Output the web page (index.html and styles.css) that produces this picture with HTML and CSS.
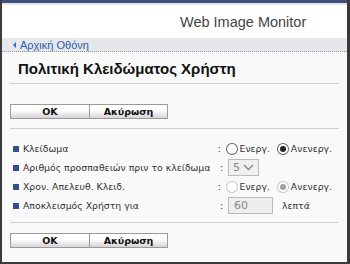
FILE: index.html
```html
<!DOCTYPE html>
<html lang="el">
<head>
<meta charset="utf-8">
<title>Πολιτική Κλειδώματος Χρήστη</title>
<link rel="stylesheet" href="styles.css">
</head>
<body>
<div class="window">
  <div class="topline"></div>
  <header class="header"><span class="brand">Web Image Monitor</span></header>
  <nav class="nav"><span class="arrow"></span><a class="navlink" href="#">Αρχική Οθόνη</a></nav>
  <main class="content">
    <h1 class="title">Πολιτική Κλειδώματος Χρήστη</h1>
    <div class="buttons"><button class="btn">OK</button><button class="btn">Ακύρωση</button></div>
    <ul class="rows">
      <li class="row"><span class="label">Κλείδωμα</span><span class="colon">:</span>
        <span class="radio"></span><span class="rtext">Ενεργ.</span>
        <span class="radio on"></span><span class="rtext">Ανενεργ.</span></li>
      <li class="row"><span class="label">Αριθμός προσπαθειών πριν το κλείδωμα</span><span class="colon">:</span>
        <span class="select">5<svg class="chev" width="11" height="7" viewBox="0 0 11 7"><path d="M1 1 L5.5 5.5 L10 1" fill="none" stroke="#8a8a8a" stroke-width="1.4"/></svg></span></li>
      <li class="row"><span class="label">Χρον. Απελευθ. Κλειδ.</span><span class="colon">:</span>
        <span class="radio dis"></span><span class="rtext dim">Ενεργ.</span>
        <span class="radio on dis"></span><span class="rtext dim">Ανενεργ.</span></li>
      <li class="row"><span class="label">Αποκλεισμός Χρήστη για</span><span class="colon">:</span>
        <span class="input">60</span><span class="unit">λεπτά</span></li>
    </ul>
    <div class="buttons"><button class="btn">OK</button><button class="btn">Ακύρωση</button></div>
  </main>
</div>
</body>
</html>
```
FILE: styles.css
```css
html, body { margin: 0; padding: 0; }
body { width: 350px; height: 264px; overflow: hidden; font-family: "DejaVu Sans", sans-serif; }
.window {
  box-sizing: border-box; width: 350px; height: 264px;
  border-left: 2px solid #3a3a3a; border-right: 3px solid #3a3a3a; border-bottom: 2px solid #3a3a3a;
  background: #f9f9f9; display: flex; flex-direction: column;
}
.topline { height: 3px; background: #3f4f80; border-bottom: 2px solid #e4e4e4; }
.header { height: 33px; background: #fff; display: flex; align-items: center; padding-left: 178px; }
.brand { font-family: "Liberation Sans", Arial, sans-serif; font-size: 14.5px; color: #444; }
.nav { height: 13px; background: #e6e7eb; border-bottom: 1px dotted #999; display: flex; align-items: center; padding-left: 11px; }
.arrow { width: 0; height: 0; border-top: 3px solid transparent; border-bottom: 3px solid transparent; border-right: 3px solid #3366cc; margin-right: 4px; }
.navlink { font-family: "Liberation Sans", Arial, sans-serif; font-size: 11px; color: #2a5db0; text-decoration: none; }
.content { flex: 1; padding: 0 8px 0 8px; }
.title { margin: 0; font-family: "Liberation Sans", Arial, sans-serif; font-size: 15px; font-weight: bold; color: #111;
  padding: 8px 0 6px 8px; border-bottom: 1px solid #cfcfcf; }
.buttons { display: flex; padding: 20px 0 9px 0; border-bottom: 1px solid #cfcfcf; }
.buttons:last-child { border-bottom: 0; padding-top: 10px; }
.btn { width: 80px; height: 15px; padding: 0; font-family: "DejaVu Sans", sans-serif; font-size: 9.5px; font-weight: bold; color: #111;
  border: 1px solid #9a9a9a; background: linear-gradient(#ffffff, #ffffff 40%, #d4d4d4); }
.btn + .btn { border-left: 0; width: 78px; }
.rows { list-style: none; margin: 0; padding: 10px 0 7px 3px; border-bottom: 1px solid #cfcfcf; }
.row { display: flex; align-items: center; height: 19px; font-size: 9.3px; color: #333; white-space: nowrap; }
.label { position: relative; width: 197px; padding-left: 10px; }
.label::before { content: ""; position: absolute; left: 0; top: 50%; margin-top: -3px; width: 6px; height: 6px; background: #34508c; }
.colon { width: 8px; }
.radio { box-sizing: border-box; width: 12px; height: 12px; border: 1px solid #666; border-radius: 50%; background: #fff; margin-right: 2px; position: relative; }
.radio.on::after { content: ""; position: absolute; left: 2px; top: 2px; width: 6px; height: 6px; border-radius: 50%; background: #222; }
.radio.dis { border-color: #c4c4c4; }
.radio.on.dis::after { background: #a0a0a0; }
.rtext { margin-right: 7px; }
.select { box-sizing: border-box; width: 31px; height: 17px; border: 1px solid #bbb; background: #f0f0f0; color: #888; display: flex; align-items: center; justify-content: space-between; padding: 0 4px 0 4px; font-size: 11px; }
.input { box-sizing: border-box; width: 45px; height: 17px; border: 1px solid #bbb; background: #eee; color: #888; display: flex; align-items: center; padding-left: 5px; font-size: 11px; margin-right: 9px; }
```
